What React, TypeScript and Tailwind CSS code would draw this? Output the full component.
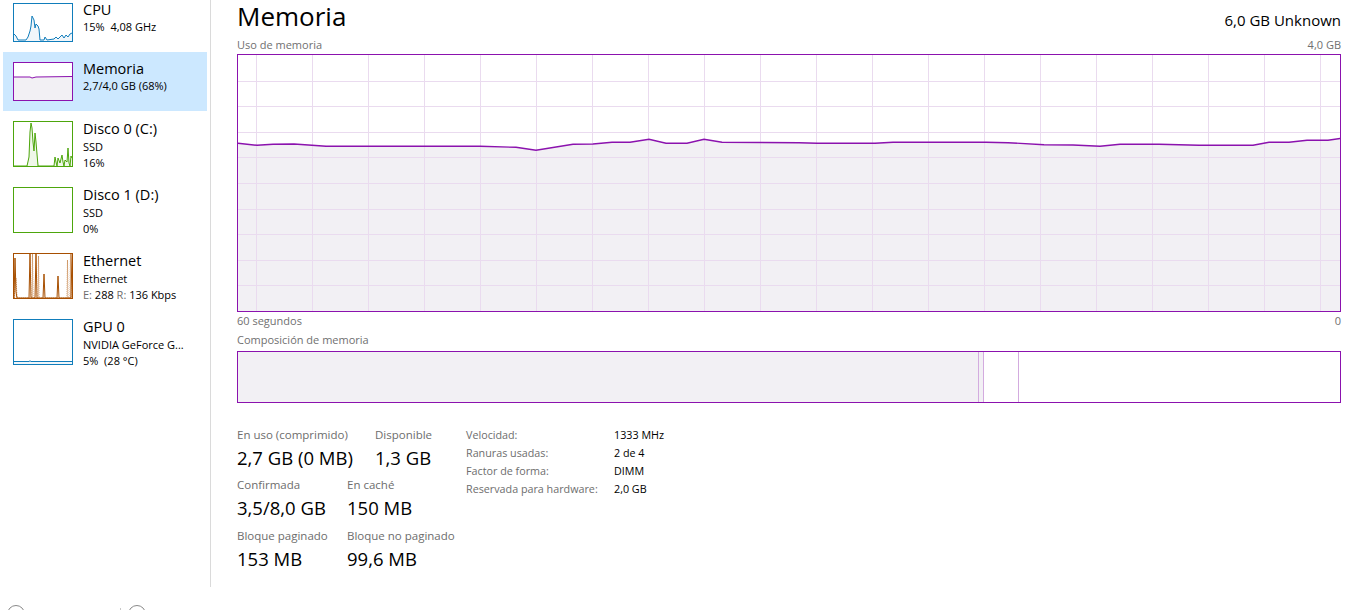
import React from 'react';

type Pt = [number, number];

const PURPLE = '#8b12ae';

const line = (pts: Pt[]) => pts.map((p, i) => (i ? 'L' : 'M') + p[0] + ' ' + p[1]).join(' ');
const area = (pts: Pt[], h: number) =>
  line(pts) + ` L${pts[pts.length - 1][0]} ${h} L${pts[0][0]} ${h} Z`;

// memory usage points, page coords of the reference
const usageAbs: Pt[] = [
  [238, 143.3], [257, 145.3], [273, 144.3], [294, 144], [312, 145.3], [326, 146.3], [480, 146.3],
  [516, 147.3], [536, 150.3], [573, 144.3], [593, 144], [612, 142.3], [630, 142.3], [649, 139.3],
  [666, 143.3], [687, 143.3], [704, 139.3], [722, 142.3], [799, 142.7], [817, 143.3], [875, 143.3],
  [893, 142.3], [986, 142.3], [1008, 142.7], [1044, 144.7], [1073, 145], [1100, 146.3], [1120, 144.3],
  [1159, 144.3], [1199, 145.3], [1253, 145.3], [1269, 142.3], [1289, 142.3], [1307, 140.3],
  [1328, 140.3], [1341, 138.3],
];
const usage: Pt[] = usageAbs.map(([x, y]) => [x - 238, y - 55]);

const cpuPts: Pt[] = [
  [0, 30], [2, 32], [4, 36], [12, 36], [14, 33], [16, 27], [17, 22], [18, 12], [20, 16], [21, 24],
  [22, 20], [24, 22], [25, 25], [26, 36], [30, 36], [31, 33], [33, 36], [40, 35], [42, 33], [44, 35],
  [46, 33], [48, 31], [50, 34], [52, 31], [54, 33], [56, 30], [58, 29],
];
const memPts: Pt[] = [[0, 14], [16, 14], [18, 15], [20, 14.5], [22, 14], [58, 13.5]];
const diskPts: Pt[] = [
  [0, 44], [13, 44], [15, 35], [16, 10], [17, 1], [18, 6], [19, 20], [20, 29], [21, 11], [22, 20],
  [24, 44], [40, 44], [41, 35], [42, 40], [43, 44], [44, 36], [46, 41], [48, 33], [49, 40], [50, 44],
  [51, 38], [53, 40], [54, 26], [55, 41], [56, 44], [57, 34], [58, 36],
];
const diskGhost: Pt[] = [
  [0, 44], [14, 44], [16, 20], [17, 6], [19, 24], [21, 16], [23, 36], [25, 44], [58, 44],
];
const ethPts: Pt[] = [
  [0, 44], [1, 4], [2, 38], [3, 44], [15, 44], [16, 0], [17, 44], [21, 44], [22, 0], [23, 44],
  [29, 44], [30, 20], [31, 44], [43, 44], [44, 22], [45, 44], [57, 44], [58, 0],
];
const ethDots: Pt[] = [
  [0, 44], [2, 24], [3, 44], [18, 44], [18.5, 0], [19, 44], [24, 44], [24.5, 2], [25, 44],
  [53, 44], [53.5, 6], [54, 44], [56, 44], [56.5, 0], [57, 44],
];

function Thumb({ color, h, children }: { color: string; h: number; children: React.ReactNode }) {
  return (
    <div className="w-[60px] bg-white border shrink-0" style={{ borderColor: color, height: h }}>
      <svg width="58" height={h - 2} className="block">
        {children}
      </svg>
    </div>
  );
}

type Item = {
  title: string;
  lines: React.ReactNode[];
  h: number;
  thumb: React.ReactNode;
  selected?: boolean;
};

const items: Item[] = [
  {
    title: 'CPU',
    lines: ['15%  4,08 GHz'],
    h: 59,
    thumb: (
      <Thumb color="#117dbb" h={39}>
        <path d={area(cpuPts, 37)} fill="#f1f6fa" />
        <path d={line(cpuPts)} fill="none" stroke="#117dbb" strokeWidth="1" />
      </Thumb>
    ),
  },
  {
    title: 'Memoria',
    lines: ['2,7/4,0 GB (68%)'],
    h: 59,
    selected: true,
    thumb: (
      <Thumb color={PURPLE} h={39}>
        <path d={area(memPts, 37)} fill="#f2f0f4" />
        <path d={line(memPts)} fill="none" stroke={PURPLE} strokeWidth="1" />
      </Thumb>
    ),
  },
  {
    title: 'Disco 0 (C:)',
    lines: ['SSD', '16%'],
    h: 66,
    thumb: (
      <Thumb color="#4da60c" h={46}>
        <path d={area(diskGhost, 44)} fill="#e4f1da" />
        <path d={area(diskPts, 44)} fill="#eff7e9" />
        <path d={line(diskPts)} fill="none" stroke="#4da60c" strokeWidth="1" />
      </Thumb>
    ),
  },
  {
    title: 'Disco 1 (D:)',
    lines: ['SSD', '0%'],
    h: 66,
    thumb: <Thumb color="#4da60c" h={46}>{null}</Thumb>,
  },
  {
    title: 'Ethernet',
    lines: [
      'Ethernet',
      <span key="e">
        <span className="text-[#6d6d6d]">E:</span> 288 <span className="text-[#6d6d6d]">R:</span> 136 Kbps
      </span>,
    ],
    h: 66,
    thumb: (
      <Thumb color="#a74f01" h={46}>
        <path d={area(ethPts, 44)} fill="#fcf3eb" />
        <path d={line(ethDots)} fill="none" stroke="#c98a52" strokeWidth="1" strokeDasharray="1 1" />
        <path d={line(ethPts)} fill="none" stroke="#a74f01" strokeWidth="1" />
      </Thumb>
    ),
  },
  {
    title: 'GPU 0',
    lines: ['NVIDIA GeForce G...', '5%  (28 °C)'],
    h: 66,
    thumb: (
      <Thumb color="#117dbb" h={46}>
        <path d="M0 41.5 L15 41.5 L16 40.8 L17 41.5 L58 41.5 L58 44 L0 44 Z" fill="#f1f6fa" />
        <path d="M0 41.5 L15 41.5 L16 40.8 L17 41.5 L58 41.5" fill="none" stroke="#117dbb" strokeWidth="1" />
      </Thumb>
    ),
  },
];

function SideItem({ item }: { item: Item }) {
  const tall = item.h > 60;
  return (
    <div
      className={`ml-[3px] w-[204px] flex pl-[10px] pt-[10px] ${item.selected ? 'bg-[#cce8ff]' : ''}`}
      style={{ height: item.h }}
    >
      {item.thumb}
      <div className={`ml-[10px] text-black ${tall ? '-mt-[1px]' : '-mt-[2px]'}`}>
        <div className="text-[14.5px] leading-[18px]">{item.title}</div>
        {item.lines.map((l, i) => (
          <div
            key={i}
            className={`text-[11px] whitespace-pre ${i === 0 ? (tall ? 'leading-[17px]' : 'leading-[16px]') : 'leading-[15px]'}`}
          >
            {l}
          </div>
        ))}
      </div>
    </div>
  );
}

function UsageGraph() {
  const vx: number[] = [];
  for (let x = 18; x < 1102; x += 56) vx.push(x);
  const hy = [1, 2, 3, 4, 5, 6, 7, 8, 9].map((k) => k * 25.6);
  return (
    <div className="h-[258px] border border-[#8b12ae] bg-white">
      <svg width="1102" height="256" className="block">
        <path d={area(usage, 256)} fill="#f2f0f4" />
        {vx.map((x) => (
          <line key={x} x1={x + 0.5} x2={x + 0.5} y1="0" y2="256" stroke="#eadbef" strokeWidth="1" />
        ))}
        {hy.map((y) => (
          <line key={y} x1="0" x2="1102" y1={Math.round(y) + 0.5} y2={Math.round(y) + 0.5} stroke="#eadbef" strokeWidth="1" />
        ))}
        <path d={line(usage)} fill="none" stroke={PURPLE} strokeWidth="1.4" />
      </svg>
    </div>
  );
}

function Stat({ label, value, w }: { label: string; value: string; w?: string }) {
  return (
    <div className={w}>
      <div className="text-[11.5px] leading-[16px] text-[#6d6d6d]">{label}</div>
      <div className="mt-[3px] text-[18.5px] leading-[24px] text-black">{value}</div>
    </div>
  );
}

const hw: [string, string][] = [
  ['Velocidad:', '1333 MHz'],
  ['Ranuras usadas:', '2 de 4'],
  ['Factor de forma:', 'DIMM'],
  ['Reservada para hardware:', '2,0 GB'],
];

export default function App() {
  return (
    <div className="w-[1348px] h-[610px] overflow-hidden bg-white font-['Open_Sans',sans-serif]">
      <div className="flex h-[587px]">
        <aside className="w-[211px] shrink-0 border-r border-[#dadada] overflow-hidden">
          <div className="-mt-[7px]">
            {items.map((it) => (
              <SideItem key={it.title} item={it} />
            ))}
          </div>
        </aside>

        <main className="flex-1 pl-[26px] pr-[7px]">
          <div className="flex justify-between items-baseline h-[32px]">
            <div className="text-[26px] leading-[34px] -mt-[1px] text-black">Memoria</div>
            <div className="text-[15px] text-black">6,0 GB Unknown</div>
          </div>
          <div className="flex justify-between pt-[6px] h-[22px] text-[11px] leading-[14px] text-[#707070]">
            <span>Uso de memoria</span>
            <span>4,0 GB</span>
          </div>
          <UsageGraph />
          <div className="flex justify-between mt-[2px] text-[11px] leading-[14px] text-[#707070]">
            <span>60 segundos</span>
            <span>0</span>
          </div>
          <div className="mt-[5px] text-[11px] leading-[14px] text-[#707070]">Composición de memoria</div>
          <div className="mt-[4px] h-[52px] border border-[#8b12ae] flex">
            <div className="w-[740px] bg-[#f2f0f4]" />
            <div className="w-[6px] bg-[#f2f0f4] border-x border-[#d3abdf]" />
            <div className="w-[35px] border-r border-[#d3abdf]" />
            <div className="flex-1" />
          </div>

          <div className="flex items-start mt-[24px]">
            <div className="w-[229px]">
              <div className="flex h-[50px]">
                <Stat w="w-[138px]" label="En uso (comprimido)" value="2,7 GB (0 MB)" />
                <Stat label="Disponible" value="1,3 GB" />
              </div>
              <div className="flex h-[51px]">
                <Stat w="w-[110px]" label="Confirmada" value="3,5/8,0 GB" />
                <Stat label="En caché" value="150 MB" />
              </div>
              <div className="flex">
                <Stat w="w-[110px]" label="Bloque paginado" value="153 MB" />
                <Stat label="Bloque no paginado" value="99,6 MB" />
              </div>
            </div>
            <div className="-mt-[1px] grid grid-cols-[148px_auto] content-start text-[10.75px] leading-[18px]">
              {hw.map(([k, v]) => (
                <React.Fragment key={k}>
                  <span className="text-[#6d6d6d]">{k}</span>
                  <span className="text-black">{v}</span>
                </React.Fragment>
              ))}
            </div>
          </div>
        </main>
      </div>

      <div className="flex items-start pl-[7px] pt-[18px]">
        <div className="w-[18px] h-[18px] rounded-full border border-[#8a8a8a] shrink-0" />
        <div className="ml-[95px] mt-[3px] w-px h-[10px] bg-[#c8c8c8]" />
        <div className="ml-[7px] w-[18px] h-[18px] rounded-full border border-[#8a8a8a] shrink-0" />
      </div>
    </div>
  );
}
